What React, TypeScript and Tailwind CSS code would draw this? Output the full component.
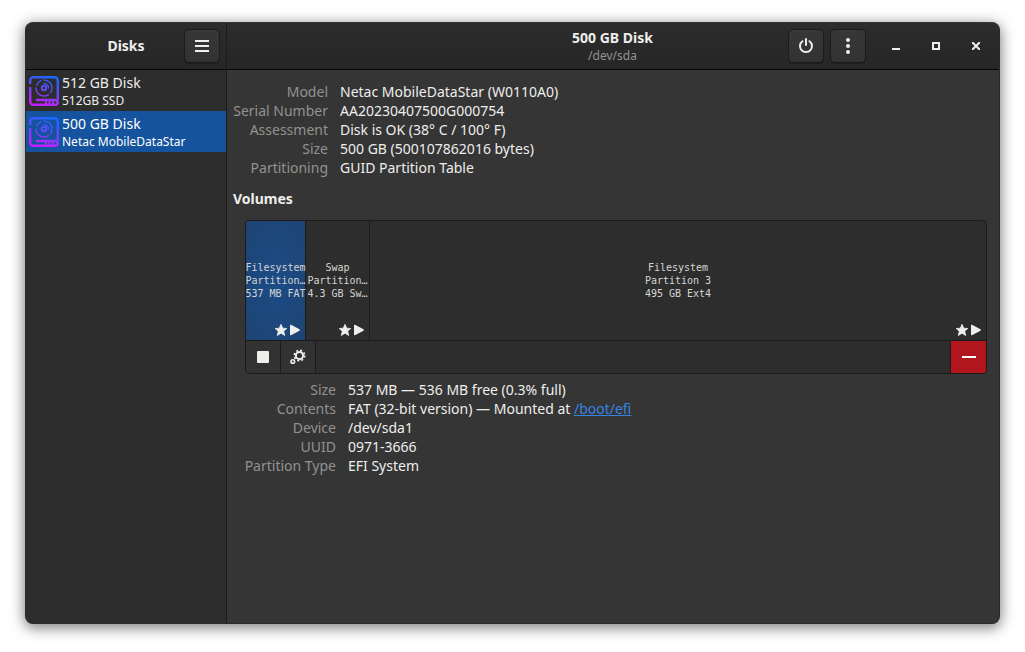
import type { ReactNode } from 'react'

type Disk = { name: string; model: string; selected?: boolean }
type Volume = { lines: string[]; width: string; selected?: boolean }
type Field = { label: string; value: ReactNode }

const disks: Disk[] = [
  { name: '512 GB Disk', model: '512GB SSD' },
  { name: '500 GB Disk', model: 'Netac MobileDataStar', selected: true },
]

const diskFields: Field[] = [
  { label: 'Model', value: 'Netac MobileDataStar (W0110A0)' },
  { label: 'Serial Number', value: 'AA20230407500G000754' },
  { label: 'Assessment', value: 'Disk is OK (38° C / 100° F)' },
  { label: 'Size', value: '500 GB (500107862016 bytes)' },
  { label: 'Partitioning', value: 'GUID Partition Table' },
]

const volumes: Volume[] = [
  { lines: ['Filesystem', 'Partition…', '537 MB FAT'], width: 'w-[60px]', selected: true },
  { lines: ['Swap', 'Partition…', '4.3 GB Sw…'], width: 'w-16' },
  { lines: ['Filesystem', 'Partition 3', '495 GB Ext4'], width: 'flex-1' },
]

const volumeFields: Field[] = [
  { label: 'Size', value: '537 MB — 536 MB free (0.3% full)' },
  {
    label: 'Contents',
    value: (
      <>
        FAT (32-bit version) — Mounted at{' '}
        <a href="#boot-efi" className="text-[#3584e4] underline">/boot/efi</a>
      </>
    ),
  },
  { label: 'Device', value: '/dev/sda1' },
  { label: 'UUID', value: '0971-3666' },
  { label: 'Partition Type', value: 'EFI System' },
]

const headerButton =
  'flex h-[34px] w-9 items-center justify-center rounded-[5px] border border-[#1b1b1b] bg-linear-to-t from-[#323232] to-[#373737] shadow-[0_1px_1px_rgba(0,0,0,0.25)]'

function DiskIcon({ id }: { id: string }) {
  const paint = `url(#${id})`
  return (
    <svg width="30" height="30" viewBox="0 0 30 30" fill="none" className="shrink-0">
      <defs>
        <linearGradient id={id} gradientUnits="userSpaceOnUse" x1="20" y1="0" x2="10" y2="30">
          <stop offset="0" stopColor="#1769ff" />
          <stop offset="0.5" stopColor="#6a45f6" />
          <stop offset="0.85" stopColor="#b626fa" />
          <stop offset="1" stopColor="#c61cff" />
        </linearGradient>
      </defs>
      <g stroke={paint} strokeWidth="2" strokeLinecap="round">
        <path d="M1.200 7V5q0-3.800 3.800-3.800h20q3.800 0 3.800 3.800v18" strokeWidth="2.400" />
        <path d="M1.200 12v13q0 3.800 3.800 3.800h20q3.800 0 3.800-2.400T25 24H8" strokeWidth="2.400" />
        <path d="M17 25v3M20.500 25v3M24 25v3" />
        <circle cx="15" cy="12" r="2.200" />
        <path d="M15 4a8 8 0 0 1 8 8a8 8 0 0 1-1.500 4.600M7 12a8 8 0 0 0 12.500 6.600M12 4.600a8 8 0 0 0-4.400 4.400M15 7.500a4.500 4.500 0 0 1 4.500 4.500" strokeWidth="1.400" />
      </g>
    </svg>
  )
}

function StarIcon() {
  return (
    <svg width="12" height="12" viewBox="0 0 12 12" fill="#eeeeec" stroke="#eeeeec" strokeWidth="0.8" strokeLinejoin="round">
      <path d="M6 .3l1.700 3.900 4.100.3L8.700 7.200l1 4.300L6 9.200l-3.700 2.300 1-4.300L.2 4.500l4.100-.3z" />
    </svg>
  )
}

function PlayIcon() {
  return (
    <svg width="12" height="12" viewBox="0 0 12 12" fill="#eeeeec">
      <path d="M1 1.500v9q0 1 1 .7l8.500-4.500q.8-.7 0-1.400L2 .8q-1-.3-1 .7z" />
    </svg>
  )
}

function GearsIcon() {
  return (
    <svg width="16" height="16" viewBox="0 0 16 16" fill="none" stroke="#eeeeec">
      <circle cx="9.500" cy="6.500" r="3.600" strokeWidth="2" />
      <circle cx="9.500" cy="6.500" r="5.200" strokeWidth="1.600" strokeDasharray="2.050 2.034" />
      <circle cx="2.800" cy="12.500" r="1.800" strokeWidth="1.600" />
    </svg>
  )
}

function Fields({ items, columns }: { items: Field[]; columns: string }) {
  return (
    <dl className={`grid gap-x-3 text-[14px] leading-[19px] ${columns}`}>
      {items.map((f) => (
        <div key={f.label} className="contents">
          <dt className="justify-self-end whitespace-nowrap text-[#929291]">{f.label}</dt>
          <dd>{f.value}</dd>
        </div>
      ))}
    </dl>
  )
}

function Sidebar() {
  return (
    <aside className="flex w-[201px] shrink-0 flex-col border-r border-[#1b1b1b] bg-[#2d2d2d]">
      <header className="flex h-[47px] items-center justify-end border-b border-[#070707] bg-linear-to-t from-[#262626] to-[#2c2c2c] pr-[6px]">
        <h1 className="flex-1 pl-[42px] text-center text-[14px] leading-5 font-bold">Disks</h1>
        <button aria-label="Menu" className={headerButton}>
          <svg width="14" height="12" viewBox="0 0 14 12" fill="#eeeeec">
            <path d="M0 0h14v2H0zM0 5h14v2H0zM0 10h14v2H0z" />
          </svg>
        </button>
      </header>
      <ul>
        {disks.map((d) => (
          <li key={d.name}>
            <button className={`flex h-[41px] w-full items-center gap-[3px] pl-[3px] text-left ${d.selected ? 'bg-[#15539e] text-white' : ''}`}>
              <DiskIcon id={d.selected ? 'disk-selected' : 'disk'} />
              <span className="flex flex-col">
                <span className="text-[14px] leading-[19px]">{d.name}</span>
                <span className="text-[12px] leading-[17px]">{d.model}</span>
              </span>
            </button>
          </li>
        ))}
      </ul>
    </aside>
  )
}

function VolumeGrid() {
  return (
    <div className="ml-3 overflow-hidden rounded-[4px] border border-[#1b1b1b] bg-[#2d2d2d]">
      <div className="flex h-[119px]">
        {volumes.map((v, i) => (
          <button
            key={i}
            className={`relative flex shrink-0 flex-col items-center justify-center whitespace-nowrap font-[DejaVu_Sans_Mono,monospace] text-[10px] leading-[13px] text-[#d5d5d3] ${v.width} ${
              i < volumes.length - 1 ? 'border-r border-[#1b1b1b]' : ''
            } ${v.selected ? 'bg-radial from-[#1b4b86] to-[#1e4473]' : ''}`}
          >
            {v.lines.map((line) => (
              <span key={line}>{line}</span>
            ))}
            <span className="absolute right-1 bottom-1 flex gap-[2px]">
              <StarIcon />
              <PlayIcon />
            </span>
          </button>
        ))}
      </div>
      <div className="flex h-[33px] border-t border-[#1b1b1b]">
        <button aria-label="Unmount" className="flex w-[35px] items-center justify-center border-r border-[#1b1b1b] bg-[#323232]">
          <span className="size-3 rounded-[1px] bg-[#eeeeec]" />
        </button>
        <button aria-label="Partition options" className="flex w-[35px] items-center justify-center border-r border-[#1b1b1b] bg-[#323232]">
          <GearsIcon />
        </button>
        <button aria-label="Delete partition" className="ml-auto flex w-9 items-center justify-center border-l border-[#1b1b1b] bg-[#b2161d]">
          <span className="h-[2px] w-[14px] bg-white" />
        </button>
      </div>
    </div>
  )
}

export default function App() {
  return (
    <div className="flex min-h-screen bg-white px-[25px] pt-[22px] pb-7 font-[Noto_Sans,sans-serif] text-[#eeeeec]">
      <div className="flex min-w-0 flex-1 overflow-hidden rounded-[8px] border border-[#2a2a2a] border-t-[#373737] bg-[#353535] shadow-[0_3px_14px_1px_rgba(0,0,0,0.5)]">
        <Sidebar />
        <main className="flex min-w-0 flex-1 flex-col">
          <header className="flex h-[47px] shrink-0 items-center border-b border-[#070707] bg-linear-to-t from-[#262626] to-[#2c2c2c] pr-[3px]">
            <div className="flex-1 pl-[210px] text-center">
              <h2 className="text-[14px] leading-5 font-bold">500 GB Disk</h2>
              <p className="text-[12px] leading-4 text-[#929291]">/dev/sda</p>
            </div>
            <div className="flex items-center gap-[6px]">
              <button aria-label="Power off" className={headerButton}>
                <svg width="16" height="16" viewBox="0 0 16 16" fill="none" stroke="#eeeeec" strokeWidth="2" strokeLinecap="round">
                  <path d="M4.500 3.200a6 6 0 1 0 7 0M8 1v6" />
                </svg>
              </button>
              <button aria-label="Drive options" className={headerButton}>
                <svg width="4" height="16" viewBox="0 0 4 16" fill="#eeeeec">
                  <circle cx="2" cy="2" r="2" />
                  <circle cx="2" cy="8" r="2" />
                  <circle cx="2" cy="14" r="2" />
                </svg>
              </button>
            </div>
            <div className="ml-[10px] flex">
              <button aria-label="Minimize" className="flex h-8 w-10 items-center justify-center">
                <svg width="8" height="8" viewBox="0 0 8 8" fill="#eeeeec">
                  <path d="M0 6h8v2H0z" />
                </svg>
              </button>
              <button aria-label="Maximize" className="flex h-8 w-10 items-center justify-center">
                <svg width="8" height="8" viewBox="0 0 8 8" fill="none" stroke="#eeeeec" strokeWidth="2">
                  <path d="M1 1h6v6H1z" />
                </svg>
              </button>
              <button aria-label="Close" className="flex h-8 w-10 items-center justify-center">
                <svg width="8" height="8" viewBox="0 0 8 8" stroke="#eeeeec" strokeWidth="2">
                  <path d="M0 0l8 8M8 0L0 8" />
                </svg>
              </button>
            </div>
          </header>
          <section className="py-3 pr-3 pl-[6px]">
            <Fields items={diskFields} columns="grid-cols-[95px_1fr]" />
            <h3 className="mt-3 mb-3 text-[14px] leading-[19px] font-bold">Volumes</h3>
            <VolumeGrid />
            <div className="mt-[6px] ml-3">
              <Fields items={volumeFields} columns="grid-cols-[91px_1fr]" />
            </div>
          </section>
        </main>
      </div>
    </div>
  )
}
